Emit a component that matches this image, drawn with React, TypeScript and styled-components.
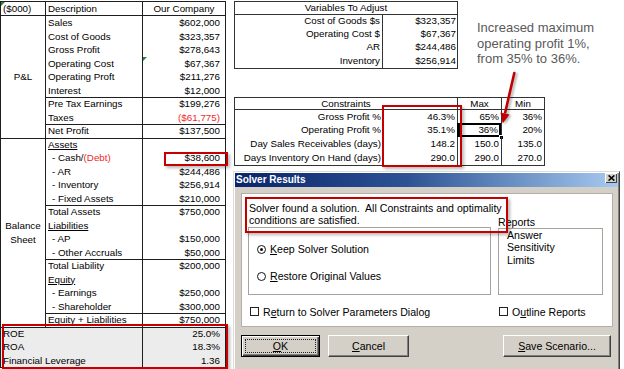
import React from "react";
import styled, { createGlobalStyle } from "styled-components";

const GlobalStyle = createGlobalStyle`
  html, body { margin: 0; padding: 0; background: #fff; }
  body { width: 624px; height: 369px; overflow: hidden; }
  *, *::before, *::after { box-sizing: border-box; }
`;

const LINE = "#1e1e1e";

const Page = styled.div`
  position: relative;
  width: 624px;
  height: 369px;
  overflow: hidden;
  display: flex;
  align-items: flex-start;
  gap: 8px;
  padding-top: 1px;
  background: #fff;
  font-family: "Liberation Sans", Arial, sans-serif;
  color: #000;
`;

/* ---------- left financial sheet ---------- */
const Sheet = styled.div`
  flex: none;
  display: grid;
  grid-template-columns: 45px 97px 82px;
  grid-template-rows: 14px repeat(26, 13.5px);
  width: 226px;
  border: 1px solid ${LINE};
  font-size: 9.8px;
  line-height: 13.5px;
  white-space: nowrap;
`;

const Flag = `
  content: "";
  position: absolute;
  left: 0;
  top: 0;
  border-top: 4px solid #1f8a3a;
  border-right: 4px solid transparent;
`;

const SheetHead = styled.div<{ $align?: string; $last?: boolean; $flag?: boolean }>`
  position: relative;
  text-align: ${(p) => p.$align || "left"};
  padding: 0 2px;
  line-height: 13px;
  border-bottom: 1px solid ${LINE};
  border-right: ${(p) => (p.$last ? "none" : `1px solid ${LINE}`)};
  &::before { ${(p) => (p.$flag ? Flag : "")} }
`;

const GroupCell = styled.div<{ $span: number; $top?: boolean }>`
  grid-column: 1;
  grid-row: span ${(p) => p.$span};
  display: flex;
  align-items: center;
  justify-content: center;
  text-align: center;
  border-right: 1px solid ${LINE};
  border-top: ${(p) => (p.$top ? `1px solid ${LINE}` : "none")};
  line-height: 13.5px;
`;

const DescCell = styled.div<{ $top?: boolean; $indent?: boolean; $under?: boolean }>`
  grid-column: 2;
  padding-left: ${(p) => (p.$indent ? "6px" : "2px")};
  border-right: 1px solid ${LINE};
  border-top: ${(p) => (p.$top ? `1px solid ${LINE}` : "none")};
  line-height: ${(p) => (p.$top ? "12.5px" : "13.5px")};
  text-decoration: ${(p) => (p.$under ? "underline" : "none")};
  text-underline-offset: 1px;
`;

const Red = styled.span`
  color: #f02828;
`;

const AmountCell = styled.div<{ $top?: boolean; $neg?: boolean; $flag?: boolean }>`
  grid-column: 3;
  position: relative;
  text-align: right;
  padding-right: 5px;
  color: ${(p) => (p.$neg ? "#f02828" : "#000")};
  border-top: ${(p) => (p.$top ? `1px solid ${LINE}` : "none")};
  line-height: ${(p) => (p.$top ? "12.5px" : "13.5px")};
  &::before { ${(p) => (p.$flag ? Flag : "")} }
`;

const RatioLabel = styled.div<{ $top?: boolean }>`
  grid-column: 1 / span 2;
  padding-left: 2px;
  background: #ececec;
  border-right: 1px solid ${LINE};
  border-top: ${(p) => (p.$top ? `1px solid ${LINE}` : "none")};
  line-height: ${(p) => (p.$top ? "12.5px" : "13.5px")};
`;

const RatioValue = styled.div<{ $top?: boolean }>`
  grid-column: 3;
  text-align: right;
  padding-right: 5px;
  background: #ececec;
  border-top: ${(p) => (p.$top ? `1px solid ${LINE}` : "none")};
  line-height: ${(p) => (p.$top ? "12.5px" : "13.5px")};
`;

/* ---------- right side ---------- */
const RightArea = styled.div`
  flex: none;
  width: 390px;
  display: flex;
  flex-direction: column;
  align-items: flex-start;
`;

const TopRow = styled.div`
  display: flex;
  align-items: flex-start;
`;

const VarGrid = styled.div`
  display: grid;
  grid-template-columns: 148px 74px;
  grid-template-rows: 13px repeat(4, 13.2px);
  width: 224px;
  border: 1px solid #333;
  font-size: 9.8px;
  white-space: nowrap;
`;

const VarHead = styled.div`
  grid-column: 1 / -1;
  text-align: center;
  line-height: 12px;
  border-bottom: 1px solid #333;
`;

const VarLabel = styled.div`
  text-align: right;
  padding-right: 2px;
  line-height: 12.4px;
  border-right: 1px solid #333;
`;

const VarValue = styled.div`
  text-align: right;
  padding-right: 1px;
  line-height: 12.4px;
`;

const Note = styled.p`
  margin: 0 0 0 19px;
  padding-top: 19px;
  font-size: 13px;
  line-height: 15.5px;
  color: #595959;
  white-space: nowrap;
`;

const ConstraintGrid = styled.div`
  margin-top: 28px;
  display: grid;
  grid-template-columns: 148px 75px 44px 42px;
  grid-template-rows: 12px repeat(4, 13.7px);
  width: 311px;
  border: 1px solid #333;
  font-size: 9.8px;
  white-space: nowrap;
`;

const CHead = styled.div<{ $wide?: boolean; $last?: boolean }>`
  grid-column: ${(p) => (p.$wide ? "1 / span 2" : "auto")};
  text-align: center;
  line-height: 11px;
  border-bottom: 1px solid #333;
  border-right: ${(p) => (p.$last ? "none" : "1px solid #333")};
`;

const CLabel = styled.div`
  text-align: right;
  padding-right: 2px;
  line-height: 13.7px;
`;

const CNum = styled.div<{ $last?: boolean; $selected?: boolean }>`
  position: relative;
  text-align: right;
  padding-right: ${(p) => (p.$selected ? "3px" : "2px")};
  line-height: 13.7px;
  border-right: ${(p) => (p.$last ? "none" : "1px solid #333")};
  box-shadow: ${(p) => (p.$selected ? "inset 0 0 0 2px #000, -1px 0 0 #000" : "none")};
  &::after {
    content: "";
    display: ${(p) => (p.$selected ? "block" : "none")};
    position: absolute;
    right: -3px;
    bottom: -3px;
    width: 5px;
    height: 5px;
    background: #000;
    border: 1px solid #fff;
  }
`;

/* ---------- dialog ---------- */
const Dialog = styled.div`
  flex: none;
  display: flex;
  flex-direction: column;
  margin: 5px 0 0 -1px;
  width: 387px;
  height: 210px;
  background: #d4d0c8;
  border: 1px solid;
  border-color: #dfdcd6 #404040 #404040 #dfdcd6;
  box-shadow: inset 1px 1px 0 #fff, inset -1px -1px 0 #808080;
  padding: 1px;
  font-size: 10.6px;
  color: #000;
`;

const TitleBar = styled.div`
  flex: none;
  width: 100%;
  height: 14px;
  display: flex;
  align-items: flex-start;
  justify-content: space-between;
  padding: 0 1px 0 1px;
  background: linear-gradient(90deg, #0a246a 0%, #2d5394 45%, #a6caf0 100%);
`;

const Title = styled.span`
  font-size: 10px;
  line-height: 13px;
  font-weight: bold;
  color: #fff;
`;

const CloseBox = styled.span`
  width: 12px;
  height: 10px;
  display: flex;
  align-items: center;
  justify-content: center;
  background: #d4d0c8;
  box-shadow: inset 1px 1px 0 #fff, inset -1px -1px 0 #404040;
`;

const DialogBody = styled.div`
  width: 100%;
  padding: 6px 5px 0 6px;
`;

const Panel = styled.div`
  display: grid;
  grid-template-columns: 243px 105px;
  grid-template-rows: 24px 68px 12px;
  column-gap: 7px;
  row-gap: 1px;
  height: 134px;
  padding: 8px 0 0 6px;
  background: #fff;
  border: 1px solid #b3afa6;
`;

const Message = styled.p`
  grid-area: 1 / 1 / 2 / 3;
  margin: 0;
  padding-left: 1px;
  line-height: 12px;
  white-space: pre;
`;

const ReportsLabel = styled.div`
  grid-area: 1 / 2 / 2 / 3;
  align-self: end;
  margin-bottom: -2px;
  line-height: 12px;
`;

const OptionGroup = styled.div`
  grid-area: 2 / 1 / 3 / 2;
  border: 1px solid #a7a39a;
  padding: 15px 0 0 8px;
  display: flex;
  flex-direction: column;
  gap: 14px;
`;

const Option = styled.div`
  display: flex;
  align-items: center;
  gap: 4px;
  height: 13px;
  line-height: 13px;
`;

const Radio = styled.span<{ $on?: boolean }>`
  width: 9px;
  height: 9px;
  border-radius: 50%;
  border: 1.6px solid #111;
  display: inline-flex;
  align-items: center;
  justify-content: center;
  &::after {
    content: "";
    width: 3px;
    height: 3px;
    border-radius: 50%;
    background: ${(p) => (p.$on ? "#111" : "transparent")};
  }
`;

const ListBox = styled.ul`
  grid-area: 2 / 2 / 3 / 3;
  margin: 1px 0 0;
  list-style: none;
  border: 1px solid #a7a39a;
  padding: 0 0 0 8px;
  line-height: 12.7px;
`;

const CheckRow = styled.div<{ $col: number }>`
  grid-row: 3;
  grid-column: ${(p) => p.$col};
  margin-top: 10px;
  display: flex;
  align-items: center;
  gap: 4px;
  height: 12px;
  padding-left: ${(p) => (p.$col === 1 ? "2px" : "1px")};
`;

const Check = styled.span`
  width: 9px;
  height: 9px;
  border: 1.5px solid #222;
  background: #fff;
`;

const ButtonRow = styled.div`
  width: 100%;
  display: flex;
  gap: 8px;
  margin-top: 8px;
  padding-right: 2px;
`;

const Button = styled.div<{ $w: number; $default?: boolean; $push?: boolean }>`
  flex: none;
  position: relative;
  width: ${(p) => p.$w}px;
  height: 22px;
  margin-left: ${(p) => (p.$push ? "auto" : "0")};
  display: flex;
  align-items: center;
  justify-content: center;
  color: #000;
  background: #d4d0c8;
  border: 1px solid;
  border-color: ${(p) => (p.$default ? "#000" : "#fff #404040 #404040 #fff")};
  box-shadow: ${(p) =>
    p.$default
      ? "inset 1px 1px 0 #fff, inset -1px -1px 0 #404040, inset -2px -2px 0 #808080"
      : "inset -1px -1px 0 #808080"};
  &::after {
    content: "";
    display: ${(p) => (p.$default ? "block" : "none")};
    position: absolute;
    inset: 3px;
    border: 1px dotted #222;
  }
`;

/* ---------- overlays ---------- */
const Highlight = styled.div<{ $x: number; $y: number; $w: number; $h: number }>`
  position: absolute;
  left: ${(p) => p.$x}px;
  top: ${(p) => p.$y}px;
  width: ${(p) => p.$w}px;
  height: ${(p) => p.$h}px;
  border: 2px solid #c40000;
  box-shadow: 2px 2px 3px rgba(0, 0, 0, 0.28);
  pointer-events: none;
`;

const ArrowSvg = styled.svg`
  position: absolute;
  left: 490px;
  top: 65px;
  pointer-events: none;
  filter: drop-shadow(2px 1px 1.2px rgba(0, 0, 0, 0.3));
`;

type Line = {
  label: string;
  value: string;
  top?: boolean;
  indent?: boolean;
  under?: boolean;
  neg?: boolean;
  debt?: boolean;
  flag?: boolean;
};

const pnl: Line[] = [
  { label: "Sales", value: "$602,000" },
  { label: "Cost of Goods", value: "$323,357" },
  { label: "Gross Profit", value: "$278,643" },
  { label: "Operating Cost", value: "$67,367", flag: true },
  { label: "Operating Proft", value: "$211,276" },
  { label: "Interest", value: "$12,000" },
  { label: "Pre Tax Earnings", value: "$199,276", top: true },
  { label: "Taxes", value: "($61,775)", neg: true },
  { label: "Net Profit", value: "$137,500", top: true },
];

const bs: Line[] = [
  { label: "Assets", value: "", under: true, top: true },
  { label: "- Cash/", value: "$38,600", indent: true, debt: true },
  { label: "- AR", value: "$244,486", indent: true },
  { label: "- Inventory", value: "$256,914", indent: true },
  { label: "- Fixed Assets", value: "$210,000", indent: true },
  { label: "Total Assets", value: "$750,000", top: true },
  { label: "Liabilities", value: "", under: true },
  { label: "- AP", value: "$150,000", indent: true },
  { label: "- Other Accruals", value: "$50,000", indent: true },
  { label: "Total Liability", value: "$200,000", top: true },
  { label: "Equity", value: "", under: true },
  { label: "- Earnings", value: "$250,000", indent: true },
  { label: "- Shareholder", value: "$300,000", indent: true },
  { label: "Equity + Liabilities", value: "$750,000", top: true },
];

const ratios = [
  { label: "ROE", value: "25.0%" },
  { label: "ROA", value: "18.3%" },
  { label: "Financial Leverage", value: "1.36" },
];

const variables = [
  ["Cost of Goods $s", "$323,357"],
  ["Operating Cost $", "$67,367"],
  ["AR", "$244,486"],
  ["Inventory", "$256,914"],
];

const constraints = [
  ["Gross Profit %", "46.3%", "65%", "36%"],
  ["Operating Profit %", "35.1%", "36%", "20%"],
  ["Day Sales Receivables (days)", "148.2", "150.0", "135.0"],
  ["Days Inventory On Hand (days)", "290.0", "290.0", "270.0"],
];

function renderLine(l: Line) {
  return (
    <React.Fragment key={l.label}>
      <DescCell $top={l.top} $indent={l.indent} $under={l.under}>
        {l.label}
        {l.debt && <Red>(Debt)</Red>}
      </DescCell>
      <AmountCell $top={l.top} $neg={l.neg} $flag={l.flag}>
        {l.value}
      </AmountCell>
    </React.Fragment>
  );
}

export default function App() {
  return (
    <>
      <GlobalStyle />
      <Page>
        <Sheet>
          <SheetHead $flag>($000)</SheetHead>
          <SheetHead>Description</SheetHead>
          <SheetHead $align="center" $last>
            Our Company
          </SheetHead>
          <GroupCell $span={9}>P&amp;L</GroupCell>
          {pnl.map(renderLine)}
          <GroupCell $span={14} $top>
            Balance
            <br />
            Sheet
          </GroupCell>
          {bs.map(renderLine)}
          {ratios.map((r, i) => (
            <React.Fragment key={r.label}>
              <RatioLabel $top={i === 0}>{r.label}</RatioLabel>
              <RatioValue $top={i === 0}>{r.value}</RatioValue>
            </React.Fragment>
          ))}
        </Sheet>

        <RightArea>
          <TopRow>
            <VarGrid>
              <VarHead>Variables To Adjust</VarHead>
              {variables.map(([k, v]) => (
                <React.Fragment key={k}>
                  <VarLabel>{k}</VarLabel>
                  <VarValue>{v}</VarValue>
                </React.Fragment>
              ))}
            </VarGrid>
            <Note>
              Increased maximum
              <br />
              operating profit 1%,
              <br />
              from 35% to 36%.
            </Note>
          </TopRow>

          <ConstraintGrid>
            <CHead $wide>Constraints</CHead>
            <CHead>Max</CHead>
            <CHead $last>Min</CHead>
            {constraints.map((row, i) => (
              <React.Fragment key={row[0]}>
                <CLabel>{row[0]}</CLabel>
                <CNum>{row[1]}</CNum>
                <CNum $selected={i === 1}>{row[2]}</CNum>
                <CNum $last>{row[3]}</CNum>
              </React.Fragment>
            ))}
          </ConstraintGrid>

          <Dialog>
            <TitleBar>
              <Title>Solver Results</Title>
              <CloseBox>
                <svg width="7" height="6" viewBox="0 0 7 6">
                  <path d="M0.6 0.4 L6.4 5.6 M6.4 0.4 L0.6 5.6" stroke="#000" strokeWidth="1.5" />
                </svg>
              </CloseBox>
            </TitleBar>
            <DialogBody>
              <Panel>
                <Message>
                  {"Solver found a solution.  All Constraints and optimality"}
                  <br />
                  {"conditions are satisfied."}
                </Message>
                <ReportsLabel>Reports</ReportsLabel>
                <OptionGroup>
                  <Option>
                    <Radio $on />
                    <span>
                      <u>K</u>eep Solver Solution
                    </span>
                  </Option>
                  <Option>
                    <Radio />
                    <span>
                      <u>R</u>estore Original Values
                    </span>
                  </Option>
                </OptionGroup>
                <ListBox>
                  <li>Answer</li>
                  <li>Sensitivity</li>
                  <li>Limits</li>
                </ListBox>
                <CheckRow $col={1}>
                  <Check />
                  <span>
                    R<u>e</u>turn to Solver Parameters Dialog
                  </span>
                </CheckRow>
                <CheckRow $col={2}>
                  <Check />
                  <span>
                    O<u>u</u>tline Reports
                  </span>
                </CheckRow>
              </Panel>
              <ButtonRow>
                <Button $w={79} $default>
                  <span>
                    <u>O</u>K
                  </span>
                </Button>
                <Button $w={81}>
                  <span>
                    <u>C</u>ancel
                  </span>
                </Button>
                <Button $w={108} $push>
                  <span>
                    <u>S</u>ave Scenario...
                  </span>
                </Button>
              </ButtonRow>
            </DialogBody>
          </Dialog>
        </RightArea>

        <Highlight $x={164} $y={152} $w={64} $h={14} />
        <Highlight $x={382} $y={105} $w={80} $h={62} />
        <Highlight $x={2} $y={324} $w={226} $h={45} />
        <Highlight $x={245} $y={197} $w={263} $h={36} />

        <ArrowSvg width="30" height="65" viewBox="490 65 30 65">
          <path d="M514.3 73 L505.2 112.5" stroke="#c00000" strokeWidth="2.6" strokeLinecap="round" />
          <path d="M502.7 123.5 L509.5 114.4 L500.5 112.4 Z" fill="#c00000" />
        </ArrowSvg>
      </Page>
    </>
  );
}
